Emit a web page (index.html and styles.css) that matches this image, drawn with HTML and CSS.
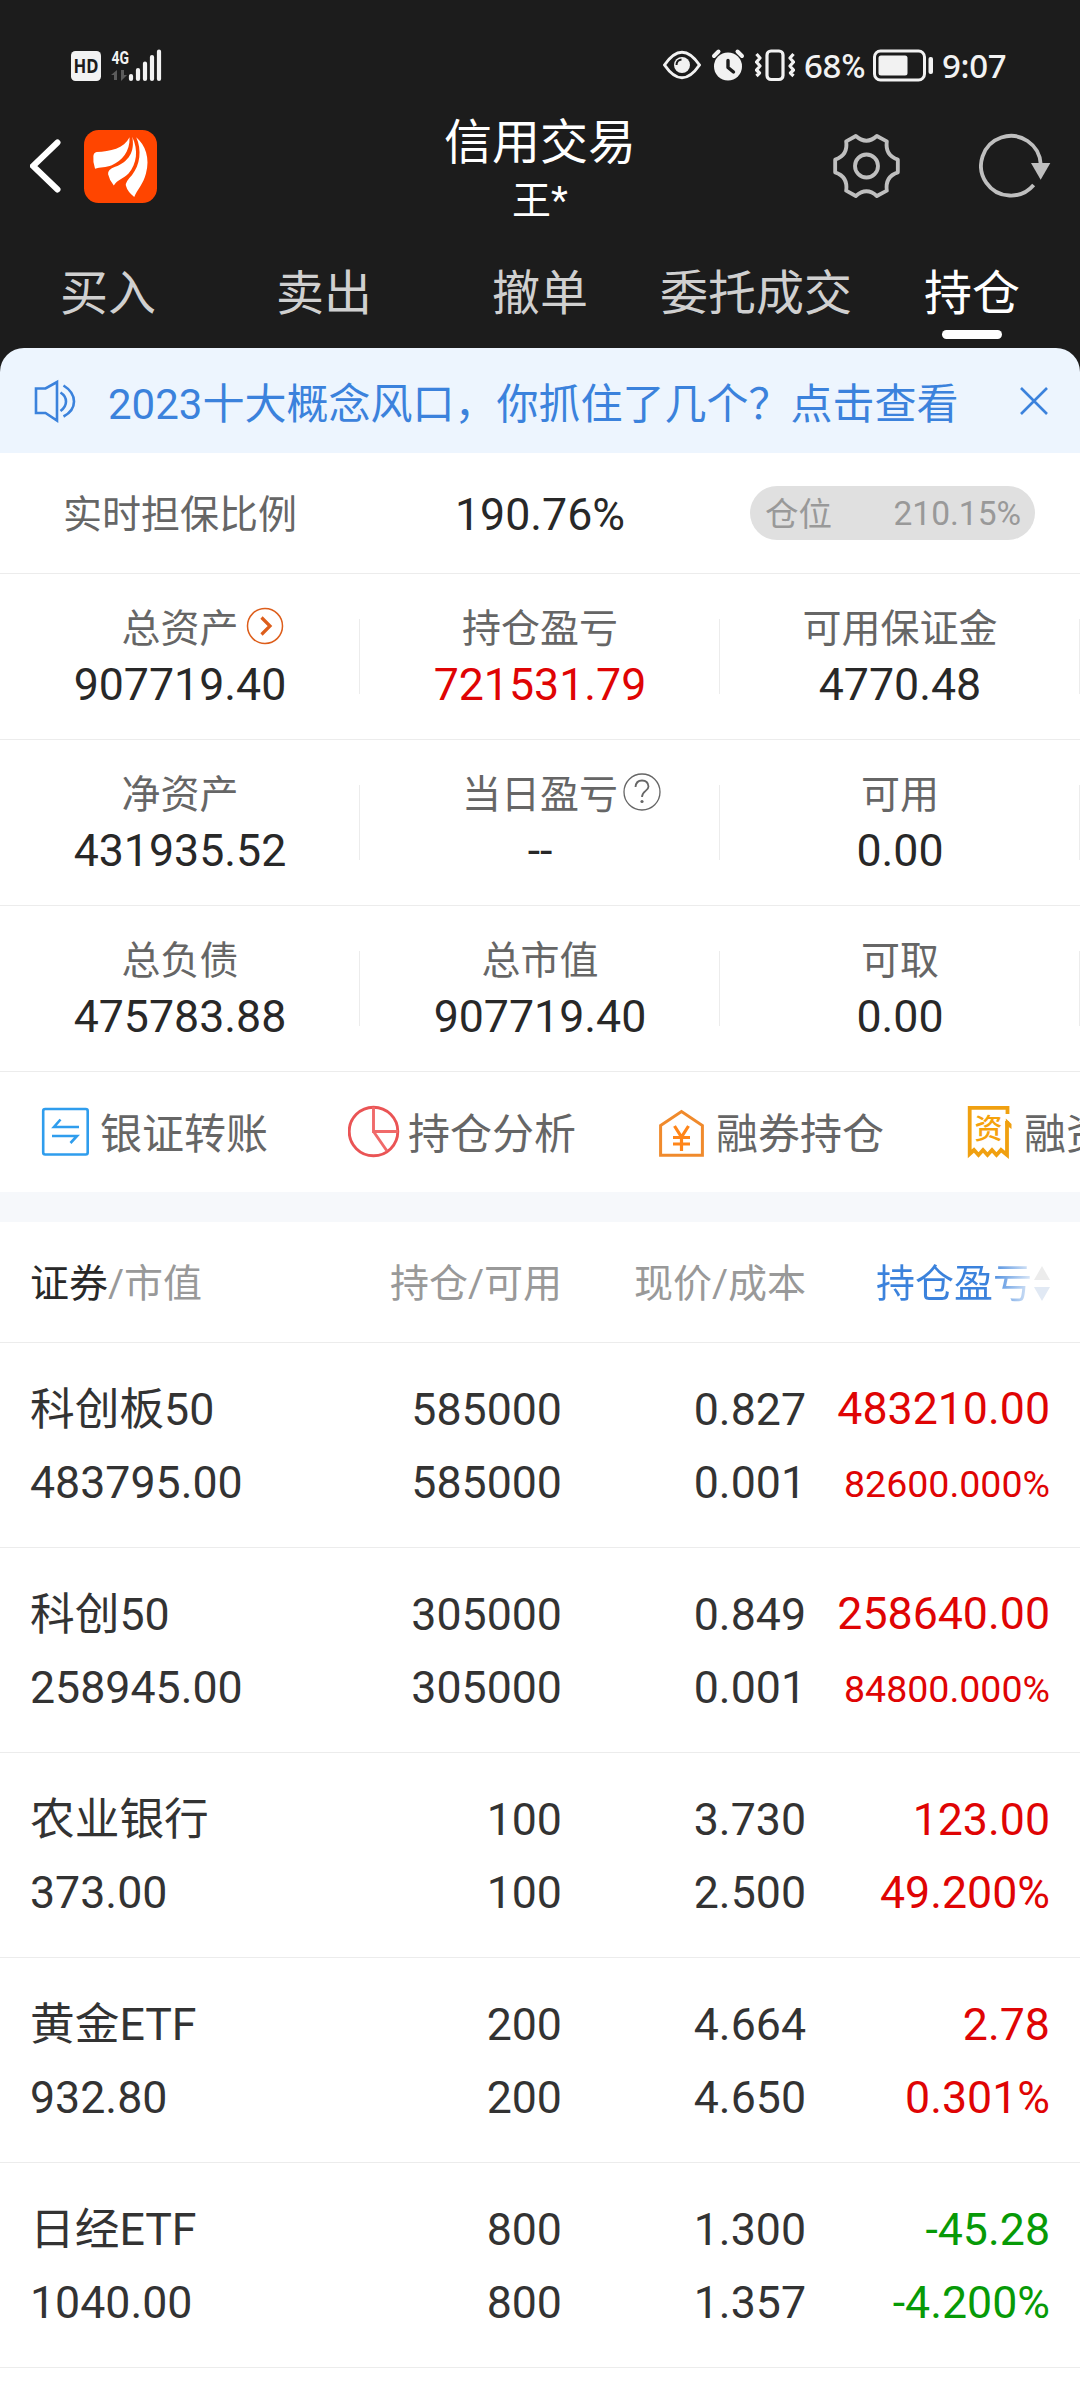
FILE: index.html
```html
<!DOCTYPE html>
<html lang="zh-CN">
<head>
<meta charset="utf-8">
<title>信用交易</title>
<link rel="stylesheet" href="styles.css">
</head>
<body>
<header class="top">
  <div class="status">
    <svg class="signal" width="94" height="40" viewBox="70 45 94 40">
      <rect x="71" y="51" width="30" height="30" rx="4.5" fill="#f2f2f2"/>
      <text class="hd" x="86" y="73" text-anchor="middle" textLength="25" lengthAdjust="spacingAndGlyphs">HD</text>
      <text class="net" x="111.500" y="63.500" textLength="17.500" lengthAdjust="spacingAndGlyphs">4G</text>
      <path d="M117 70v10h-3v-5h-3zM121 70h3v5h3l-6 6z" fill="#5c5c5c"/>
      <path d="M131 76v3M138 70v9M145 63.500v15.500M152 57v22M159 51.500v27.500" stroke="#f2f2f2" stroke-width="4.200" stroke-linecap="round"/>
    </svg>
    <div class="status-right">
      <svg width="38" height="36" viewBox="663.500 47 38 36" fill="none" stroke="#f2f2f2" stroke-width="3">
        <path d="M665 65Q682.500 39.500 700 65Q682.500 90.500 665 65Z" stroke-linejoin="round"/>
        <circle cx="682.500" cy="65" r="8" fill="#f2f2f2" stroke="none"/>
        <path d="M677 65q0-5 5-5.500" stroke="#1c1c1c" stroke-width="2"/>
      </svg>
      <svg class="alarm" width="34" height="36" viewBox="712 47 34 36">
        <circle cx="729" cy="66.500" r="14" fill="#f2f2f2"/>
        <path d="M715 56l4.500-4.500M743 56l-4.500-4.500" stroke="#f2f2f2" stroke-width="4" stroke-linecap="round"/>
        <path d="M729 60.500v7l5.500 4.500" stroke="#1c1c1c" stroke-width="3.400" stroke-linecap="round" stroke-linejoin="round" fill="none"/>
      </svg>
      <svg class="vibrate" width="40" height="36" viewBox="756 47 40 36" fill="none" stroke="#f2f2f2" stroke-width="3.200" stroke-linejoin="round">
        <rect x="768" y="51" width="16" height="28.500" rx="4"/>
        <path d="M757.500 54l3.500 4-3.500 4 3.500 4-3.500 4 3 3-3 3M794.500 54l-3.500 4 3.500 4-3.500 4 3.500 4-3 3 3 3"/>
      </svg>
      <span class="percent">68<span class="sign">%</span></span>
      <svg class="battery" width="62" height="36" viewBox="873 47 62 36">
        <rect x="875.500" y="51" width="50" height="29" rx="6" fill="none" stroke="#f2f2f2" stroke-width="3"/>
        <rect x="879.500" y="55.500" width="29" height="20" rx="2.500" fill="#f2f2f2"/>
        <rect x="929.500" y="57" width="4.500" height="17" rx="2" fill="#f2f2f2"/>
      </svg>
      <span class="clock">9:07</span>
    </div>
  </div>
  <div class="titlebar">
    <div class="side">
      <svg width="32" height="56" viewBox="30 138 32 56" fill="none" stroke="#fff" stroke-width="6" stroke-linecap="round"><path d="M57.500 142.500L33 166l24.500 23.500"/></svg>
      <svg class="logo" width="73" height="73" viewBox="252 300 218 218">
        <rect x="252" y="300" width="218" height="218" rx="44" fill="#ff4500"/>
        <g fill="#fff">
          <path d="M388 322C372 355 330 365 290 366Q281 368 280 378Q278 396 285 416C300 410 318 412 335 405C365 392 390 365 388 322Z"/>
          <path d="M396 320C405 365 385 395 345 410Q322 418 324 432Q328 450 341 466C352 448 370 445 385 430C410 400 415 360 396 320Z"/>
          <path d="M408 322C425 360 420 405 395 435Q375 455 377 466Q382 485 402 500C410 480 430 460 437 430C450 385 435 345 408 322Z"/>
        </g>
      </svg>
    </div>
    <div class="title"><h1>信用交易</h1><p>王*</p></div>
    <div class="side side-right">
      <svg width="69" height="68" viewBox="574 306 206 204" fill="none" stroke="#bfbfbf" stroke-width="11.500" stroke-linejoin="round">
        <path d="M645 318Q677 346 708 318L738 334Q732 376 771 389V427Q732 440 738 482L708 498Q677 470 645 498L616 482Q622 440 583 427V389Q622 376 616 334Z"/>
        <circle cx="677" cy="408" r="34.500"/>
      </svg>
      <svg class="refresh" width="72" height="68" viewBox="1016 306 216 204">
        <path d="M1201 402A89.500 89.500 0 1 0 1180 465" fill="none" stroke="#bfbfbf" stroke-width="11.500"/>
        <path d="M1172 399h58l-29 50z" fill="#bfbfbf"/>
      </svg>
    </div>
  </div>
  <nav class="tabs">
    <a>买入</a><a>卖出</a><a>撤单</a><a>委托成交</a><a class="active">持仓</a>
  </nav>
</header>
<main>
  <div class="notice-wrap">
    <div class="notice">
      <svg width="44" height="44" viewBox="33 378 44 44" fill="none" stroke="#3b82dc" stroke-width="2.600">
        <path d="M36 387.500H45.500L57 381V419.500L45.500 412H36Z"/>
        <path d="M60.500 391.500Q66 395 66 400.500T60.500 410M63.500 384.500Q74 391 74 400.500T63.500 415.500"/>
      </svg>
      <span class="notice-text">2023十大概念风口，你抓住了几个？点击查看</span>
      <svg class="close" width="30" height="30" viewBox="0 0 30 30" stroke="#3b82dc" stroke-width="2.600"><path d="M2 2L28 28M28 2L2 28"/></svg>
    </div>
  </div>
  <section class="ratio">
    <span class="label">实时担保比例</span>
    <span class="value">190.76%</span>
    <span class="pill"><span class="pill-name">仓位</span><span>210.15%</span></span>
  </section>
  <section class="stats">
    <div class="stat"><span class="label">总资产<svg class="tip" width="38" height="38" viewBox="0 0 38 38" fill="none" stroke="#dd5e1b"><circle cx="19" cy="19" r="17.500" stroke-width="1.500"/><path d="M15.500 10.500L24 19L15.500 27.500" stroke-width="3.200"/></svg></span><span class="value">907719.40</span></div>
    <div class="stat"><span class="label">持仓盈亏</span><span class="value up">721531.79</span></div>
    <div class="stat"><span class="label">可用保证金</span><span class="value">4770.48</span></div>
    <div class="stat"><span class="label">净资产</span><span class="value">431935.52</span></div>
    <div class="stat"><span class="label">当日盈亏<svg class="tip help" width="38" height="38" viewBox="0 0 38 38" fill="none" stroke="#666"><circle cx="19" cy="19" r="18" stroke-width="1.300"/><path d="M12.500 14Q13 7.500 19 7.500T25.500 13.500C25.500 18 19 18 19 24" stroke-width="1.800"/><circle cx="19" cy="28.500" r="1.600" fill="#666" stroke="none"/></svg></span><span class="value">--</span></div>
    <div class="stat"><span class="label">可用</span><span class="value">0.00</span></div>
    <div class="stat"><span class="label">总负债</span><span class="value">475783.88</span></div>
    <div class="stat"><span class="label">总市值</span><span class="value">907719.40</span></div>
    <div class="stat"><span class="label">可取</span><span class="value">0.00</span></div>
  </section>
  <section class="quick">
    <a><svg width="60" height="60" viewBox="40 1102 60 60" fill="none" stroke="#2f9ded" stroke-width="2.600"><rect x="43.200" y="1109" width="44.500" height="45.500" rx="2"/><path d="M79 1127H54L60.500 1119.500M52 1136H77L70.500 1143"/></svg><span>银证转账</span></a>
    <a><svg width="60" height="60" viewBox="348 1102 60 60" fill="none" stroke="#ea5455" stroke-width="2.900"><circle cx="373.500" cy="1131.500" r="24.300"/><path d="M373.500 1107V1131.500H398M373.500 1131.500L387 1151" stroke="#f06a6a"/></svg><span>持仓分析</span></a>
    <a><svg width="60" height="60" viewBox="656 1102 60 60" fill="none" stroke="#f08a2c" stroke-width="3"><path d="M660.600 1125.500L681.500 1111.500L702.400 1125.500V1155.300H660.600Z"/><path d="M674.500 1126L681.500 1137L688.500 1126M681.500 1137V1151M673 1137.500H690M673 1144H690" stroke="#ff8519" stroke-width="3.200"/></svg><span>融券持仓</span></a>
    <a><svg width="60" height="60" viewBox="964 1102 60 60" fill="none" stroke="#f0a010" stroke-width="3.800"><path d="M1007.500 1114V1107.800H969.700V1154L974 1150L978.500 1155L983 1150L987.500 1155L992 1150L996.500 1155L1001 1150L1007 1155V1121"/><path d="M1005.800 1118.500L1011.500 1124V1129L1005.800 1125Z" fill="#f0a010" stroke="none"/><text class="fund" x="988.500" y="1139" text-anchor="middle">资</text></svg><span>融资持仓</span></a>
  </section>
  <section class="holdings">
    <div class="row head"><span class="dim"><b>证券</b>/市值</span><span>持仓/可用</span><span>现价/成本</span>
      <span class="sort"><span class="fade">持仓盈亏</span><svg width="16" height="36" viewBox="0 0 16 36"><path d="M8 0L16 14H0Z" fill="#ececec"/><path d="M8 35L0 21H16Z" fill="#e1e9f4"/></svg></span></div>
    <div class="row"><span>科创板50<br>483795.00</span><span>585000<br>585000</span><span>0.827<br>0.001</span><span class="up">483210.00<br><small>82600.000%</small></span></div>
    <div class="row"><span>科创50<br>258945.00</span><span>305000<br>305000</span><span>0.849<br>0.001</span><span class="up">258640.00<br><small>84800.000%</small></span></div>
    <div class="row"><span>农业银行<br>373.00</span><span>100<br>100</span><span>3.730<br>2.500</span><span class="up">123.00<br>49.200%</span></div>
    <div class="row"><span>黄金ETF<br>932.80</span><span>200<br>200</span><span>4.664<br>4.650</span><span class="up">2.78<br>0.301%</span></div>
    <div class="row"><span>日经ETF<br>1040.00</span><span>800<br>800</span><span>1.300<br>1.357</span><span class="down">-45.28<br>-4.200%</span></div>
  </section>
</main>
</body>
</html>
```

FILE: styles.css
```css
* { box-sizing: border-box; margin: 0; padding: 0; }

body {
  width: 1080px;
  height: 2388px;
  overflow: hidden;
  background: #fff;
  color: #282828;
  font-family: Roboto, "Noto Sans CJK SC", sans-serif;
  font-size: 44.700px;
}

svg { display: block; flex: none; }

.top { background: #1c1c1c; color: #fff; }

.status {
  height: 110px;
  padding: 20px 73px 0 70px;
  display: flex;
  align-items: center;
  justify-content: space-between;
  color: #f2f2f2;
}
.hd { font: 700 20px "Noto Sans", sans-serif; fill: #1c1c1c; }
.net { font: 700 18px Roboto, sans-serif; fill: #f2f2f2; }
.status-right { display: flex; align-items: center; }
.alarm { margin-left: 10px; }
.vibrate { margin-left: 10px; }
.percent, .clock { padding-top: 2px; font: 500 33px/36px "Noto Sans", sans-serif; }
.percent { width: 61px; margin-left: 9px; white-space: nowrap; letter-spacing: -0.300px; }
.sign { font-family: Roboto, sans-serif; }
.battery { margin-left: 7px; }
.clock { width: 65px; margin-left: 8px; letter-spacing: -0.300px; }

.titlebar { height: 110px; display: flex; justify-content: space-between; }
.side { width: 260px; padding-left: 30px; display: flex; align-items: center; gap: 22px; padding-top: 2px; }
.side-right { padding: 2px 29px 0 0; gap: 78px; justify-content: flex-end; }
.title { text-align: center; }
.title h1 { font-size: 48px; font-weight: 400; line-height: 66px; }
.title p { font-size: 39px; line-height: 51px; }

.tabs { height: 128px; display: flex; font-size: 48px; color: #d0d0d0; }
.tabs a { flex: 1; display: flex; flex-direction: column; align-items: center; padding-top: 44px; line-height: 60px; white-space: nowrap; }
.tabs .active { color: #fff; }
.active::after { content: ""; width: 60px; height: 9px; margin-top: 6px; border-radius: 5px; background: #fff; }

.notice-wrap { background: #1c1c1c; }
.notice {
  height: 105px;
  padding: 0 31px 0 33px;
  display: flex;
  align-items: center;
  background: #edf5fe;
  border-radius: 24px 24px 0 0;
  color: #3b82dc;
  font-size: 42px;
}
.notice-text { margin-left: 31px; padding-bottom: 1px; white-space: nowrap; }
.close { margin-left: auto; }

.label { font-size: 39px; line-height: 50px; color: #666; }
.value { line-height: 60px; }
.up { color: #df0404; }
.down { color: #079a07; }

.ratio {
  height: 121px;
  padding-top: 2px;
  display: grid;
  grid-template-columns: repeat(3, 360px);
  align-items: center;
  justify-items: center;
  border-bottom: 1px solid #ececec;
}
.ratio .label { padding-top: 2px; }
.ratio .value { padding-top: 1px; }
.pill {
  width: 285px;
  height: 54px;
  margin: -2px 15px 0 0;
  padding: 0 14px 0 15px;
  display: flex;
  align-items: center;
  justify-content: space-between;
  border-radius: 27px;
  background: #e0e0e0;
  color: #999;
  font-size: 33.500px;
}
.pill-name { padding-bottom: 3px; }

.stats { display: grid; grid-template-columns: repeat(3, 360px); }
.stat {
  height: 166px;
  padding-top: 30px;
  display: flex;
  flex-direction: column;
  align-items: center;
  border-bottom: 1px solid #ececec;
  background: linear-gradient(#ececec, #ececec) right 45px / 1px 75px no-repeat;
}
.stat .label { display: flex; align-items: center; }
.stat .value { margin-top: 1px; }
.tip { margin: -6px -45px 0 7px; }
.help { margin-right: -43px; margin-left: 5px; }

.quick {
  height: 120px;
  padding: 0 0 0 40px;
  display: flex;
  align-items: center;
  gap: 80px;
  overflow: hidden;
  font-size: 42px;
  color: #666;
}
.quick a { flex: none; width: 228px; display: flex; align-items: center; white-space: nowrap; }
.quick span { padding-bottom: 3px; }
.fund { font: 500 28px "Noto Sans CJK SC", sans-serif; fill: #f5a20c; stroke: none; }

.holdings { border-top: 30px solid #f6f8fb; }
.row {
  height: 205px;
  padding: 4px 30px 0;
  display: grid;
  grid-template-columns: 300px 232px 244px 244px;
  align-items: center;
  text-align: right;
  line-height: 73px;
  white-space: nowrap;
  color: #333;
  border-bottom: 1px solid #ececec;
}
.row > :first-child { text-align: left; }
.row .up { color: #df0404; }
.row .down { color: #079a07; }
.row small { font-size: 37.500px; }
.head { height: 121px; font-size: 39px; color: #999; }
.head b { font-weight: 400; color: #282828; }
.sort { display: flex; align-items: center; justify-content: flex-end; gap: 2px; }
.fade {
  background: linear-gradient(90deg, #3b82dc 72%, #dfeaf8 100%);
  background-clip: text;
  color: transparent;
}
```
